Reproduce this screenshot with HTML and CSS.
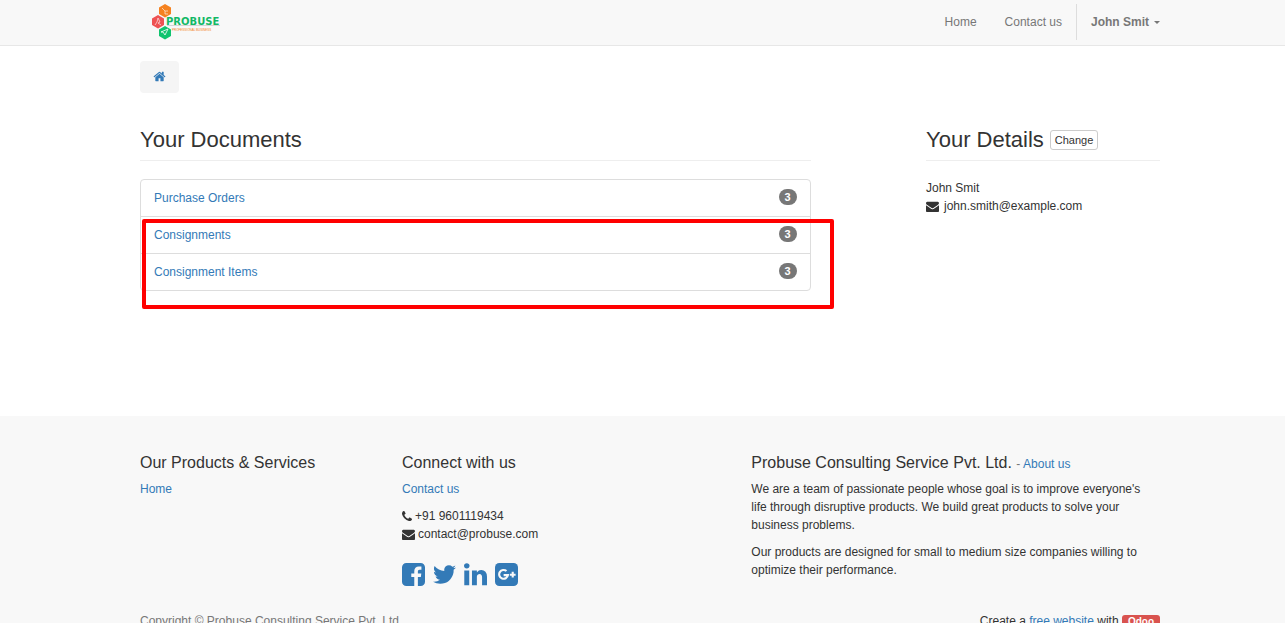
FILE: index.html
```html
<!DOCTYPE html>
<html lang="en">
<head>
<meta charset="utf-8">
<title>Your Documents</title>
<link rel="stylesheet" href="styles.css">
</head>
<body>
<svg class="sprite" aria-hidden="true">
  <symbol id="envelope" viewBox="0 0 1792 1792"><path d="M1792 710v794q0 66-47 113t-113 47h-1472q-66 0-113-47t-47-113v-794q44 49 101 87 362 246 497 345 57 42 92.500 65.500t94.500 48 110 24.500h2q51 0 110-24.500t94.500-48 92.500-65.500q170-123 498-345 57-39 100-87zm0-294q0 79-49 151t-122 123q-376 261-468 325-10 7-42.500 31t-54 38.500-52 32.500-57.500 27-50 9h-2q-23 0-50-9t-57.500-27-52-32.500-54-38.500-42.500-31q-91-64-262-182.500t-205-142.500q-62-42-117-115.500t-55-136.500q0-78 41.500-130t118.500-52h1472q65 0 112.500 47t47.500 113z"/></symbol>
</svg>
<header class="topbar">
  <div class="container topbar-row">
    <a class="brand" href="#" aria-label="Probuse">
      <svg width="72" height="40" viewBox="0 0 72 40">
        <path fill="#f58220" d="M15 4l6 3.500v6.500l-6 3.500-6-3.500V7.500z"/>
        <path fill="#ee5253" d="M8 15l6 3.500v6.500l-6 3.500-6-3.500v-6.500z"/>
        <path fill="#10c46f" d="M15 26l6 3.500v6.500l-6 3.500-6-3.500v-6.500z"/>
        <g fill="none" stroke="#fff" stroke-opacity=".6">
          <path d="M12 8l3 3m0 0h3m-3 0v3h3"/>
          <path d="M5 25l2-3m0 0l1-4 2 4-2 1m0 0l3 2"/>
          <path d="M11 32l7-3-3 6-2-3z" stroke-opacity=".8"/>
        </g>
        <path stroke="#d5d5d5" d="M17 25.500h53"/>
        <text class="brand-name" x="16" y="25">PROBUSE</text>
        <text class="brand-tag" x="22" y="31">PROFESSIONAL BUSINESS</text>
      </svg>
    </a>
    <nav class="nav">
      <a href="#">Home</a>
      <a href="#">Contact us</a>
      <button class="user" type="button">John Smit <span class="caret"></span></button>
    </nav>
  </div>
</header>
<main class="main">
  <div class="container">
    <nav class="crumb" aria-label="Breadcrumb">
      <a href="#" aria-label="Home"><svg class="icon" viewBox="0 0 1792 1792"><path d="M1472 992v480q0 26-19 45t-45 19h-384v-384h-256v384h-384q-26 0-45-19t-19-45v-480q0-1 .5-3t.5-3l575-474 575 474q1 2 1 6zm223-69l-62 74q-8 9-21 11h-3q-13 0-21-7l-692-577-692 577q-12 8-24 7-13-2-21-11l-62-74q-8-10-7-23.500t11-21.500l719-599q32-26 76-26t76 26l244 204v-195q0-14 9-23t23-9h192q14 0 23 9t9 23v408l219 182q10 8 11 21.500t-7 23.500z"/></svg></a>
    </nav>
    <div class="grid">
      <section class="documents">
        <h1 class="title">Your Documents</h1>
        <div class="list-wrap">
          <ul class="list">
            <li><a href="#">Purchase Orders</a><span class="badge">3</span></li>
            <li><a href="#">Consignments</a><span class="badge">3</span></li>
            <li><a href="#">Consignment Items</a><span class="badge">3</span></li>
          </ul>
          <div class="highlight"></div>
        </div>
      </section>
      <section class="details">
        <h2 class="title">Your Details <button class="change" type="button">Change</button></h2>
        <div>John Smit</div>
        <div class="line wide"><svg class="icon"><use href="#envelope"/></svg>john.smith@example.com</div>
      </section>
    </div>
  </div>
</main>
<footer class="footer">
  <div class="container">
    <div class="grid">
      <section class="products">
        <h3 class="subtitle">Our Products &amp; Services</h3>
        <a href="#">Home</a>
      </section>
      <section class="connect">
        <h3 class="subtitle">Connect with us</h3>
        <p><a href="#">Contact us</a></p>
        <div class="line"><svg class="icon phone" viewBox="192 0 1408 1792"><path d="M1600 1240q0 27-10 70.500t-21 68.500q-21 50-122 106-94 51-186 51-27 0-53-3.500t-57.500-12.500-47-14.500-55.500-20.500-49-18q-98-35-175-83-127-79-264-216t-216-264q-48-77-83-175-3-9-18-49t-20.500-55.500-14.500-47-12.500-57.500-3.500-53q0-92 51-186 56-101 106-122 25-11 68.500-21t70.500-10q14 0 21 3 18 6 53 76 11 19 30 54t35 63.500 31 53.500q3 4 17.500 25t21.500 35.500 7 28.500q0 20-28.500 50t-62 55-62 53-28.500 46q0 9 5 22.500t8.500 20.500 14 24 11.500 19q76 137 174 235t235 174q2 1 19 11.500t24 14 20.500 8.500 22.500 5q18 0 46-28.500t53-62 55-62 50-28.500q14 0 28.500 7t35.500 21.500 25 17.500q25 15 53.500 31t63.500 35 54 30q70 35 76 53 3 7 3 21z"/></svg>+91 9601119434</div>
        <div class="line"><svg class="icon"><use href="#envelope"/></svg>contact@probuse.com</div>
        <div class="social">
          <a href="#" aria-label="Facebook"><svg viewBox="128 128 1536 1536"><path d="M1376 128q119 0 203.500 84.500t84.500 203.500v960q0 119-84.500 203.500t-203.500 84.500h-188v-595h199l30-232h-229v-148q0-56 23.500-84t91.500-28l122-1v-207q-63-9-178-9-136 0-217.500 80t-81.500 226v171h-200v232h200v595h-532q-119 0-203.500-84.500t-84.500-203.500v-960q0-119 84.500-203.500t203.500-84.500h960z"/></svg></a>
          <a href="#" aria-label="Twitter"><svg viewBox="108 128 1576 1536"><path d="M1684 408q-67 98-162 167 1 14 1 42 0 130-38 259.500t-115.500 248.500-184.500 210.500-258 146-323 54.500q-271 0-496-145 35 4 78 4 225 0 401-138-105-2-188-64.500t-114-159.500q33 5 61 5 43 0 85-11-112-23-185.500-111.500t-73.500-205.500v-4q68 38 146 41-66-44-105-115t-39-154q0-88 44-163 121 149 294.500 238.500t371.500 99.500q-8-38-8-74 0-134 94.500-228.500t228.500-94.500q140 0 236 102 109-21 205-78-37 115-142 178 93-10 186-50z"/></svg></a>
          <a href="#" aria-label="LinkedIn"><svg viewBox="128 128 1536 1536"><path d="M477 625v991h-330v-991h330zm21-306q1 73-50.500 122t-135.500 49h-2q-82 0-132-49t-50-122q0-74 51.500-122.500t134.500-48.500 133 48.500 51 122.500zm1166 729v568h-329v-530q0-105-40.500-164.500t-126.500-59.500q-63 0-105.500 34.500t-63.500 85.500q-11 30-11 81v553h-329q2-399 2-647t-1-296l-1-48h329v144h-2q20-32 41-56t56.500-52 87-43.500 114.500-15.500q171 0 275 113.500t104 332.500z"/></svg></a>
          <a href="#" aria-label="Google Plus"><svg viewBox="0 0 24 24"><rect width="24" height="24" rx="4.500"/><path fill="none" stroke="#f8f8f8" stroke-width="2.200" d="M12 8.400a4.600 4.600 0 1 0 1.500 4.300H9M18.500 9.200v6M15.500 12.200h6"/></svg></a>
        </div>
      </section>
      <section class="about">
        <h3 class="subtitle">Probuse Consulting Service Pvt. Ltd. <small>- <a href="#">About us</a></small></h3>
        <p>We are a team of passionate people whose goal is to improve everyone's<br>life through disruptive products. We build great products to solve your<br>business problems.</p>
        <p>Our products are designed for small to medium size companies willing to<br>optimize their performance.</p>
      </section>
    </div>
    <div class="bottom">
      <span class="copyright">Copyright © Probuse Consulting Service Pvt. Ltd.</span>
      <span>Create a <a href="#">free website</a> with <a class="odoo" href="#">Odoo</a></span>
    </div>
  </div>
</footer>
</body>
</html>
```
FILE: styles.css
```css
* { box-sizing: border-box; }
html { scrollbar-width: none; }
body {
  margin: 0;
  background: #fff;
  color: #333;
  font: 12px/18px "Liberation Sans", Arial, sans-serif;
}
a { color: #337ab7; text-decoration: none; }
button { font-family: inherit; cursor: pointer; }
p { margin: 0 0 9px; }
.sprite { display: none; }

.topbar, .main, .footer { padding-left: 15px; }
.container { max-width: 1048px; margin: 0 auto; padding: 0 14px; }

.topbar { background: #f8f8f8; border-bottom: 1px solid #e7e7e7; }
.topbar-row { display: flex; justify-content: space-between; height: 45px; }
.brand { padding-left: 10px; }
.brand svg { display: block; }
.brand-name { font: bold 10px "DejaVu Sans", sans-serif; fill: #12b866; }
.brand-tag { font: 3px "Liberation Sans", sans-serif; fill: #f58220; }
.nav { display: flex; align-items: flex-start; padding-top: 4px; }
.nav a { padding: 9px 14px; color: #777; }
.user {
  display: flex;
  align-items: center;
  gap: 5px;
  height: 36px;
  padding: 0 0 0 14px;
  border: 0;
  border-left: 1px solid #ddd;
  background: none;
  color: #777;
  font-size: 12px;
  font-weight: bold;
}
.caret { border: 3px solid transparent; border-top-color: #777; border-bottom: 0; }

.main { min-height: 370px; padding-top: 15px; }
.crumb {
  display: inline-flex;
  padding: 7px 13px;
  border-radius: 4px;
  background: #f5f5f5;
}
.icon { width: 13px; height: 13px; fill: currentColor; }
.crumb a { display: flex; height: 18px; padding-top: 2px; }
.grid {
  display: grid;
  grid-template-columns: repeat(12, minmax(0, 1fr));
  margin: 0 -14px;
}
.grid > section { padding: 0 14px; }
.documents { grid-column: 1 / span 8; }
.details { grid-column: 10 / span 3; }
.title {
  display: flex;
  align-items: center;
  gap: 6px;
  height: 43px;
  margin: 25px 0 18px;
  padding-top: 2px;
  border-bottom: 1px solid #eee;
  font-size: 22px;
  font-weight: normal;
  line-height: 26px;
}
.change {
  height: 20px;
  padding: 0 4px;
  border: 1px solid #ccc;
  border-radius: 3px;
  background: #fff;
  color: #333;
  font-size: 11px;
}
.list-wrap { position: relative; }
.list {
  margin: 0;
  padding: 0;
  list-style: none;
  border: 1px solid #ddd;
  border-radius: 4px;
}
.list li {
  display: flex;
  align-items: flex-start;
  justify-content: space-between;
  height: 36px;
  padding: 9px 13px;
}
.list li + li { height: 37px; border-top: 1px solid #ddd; }
.badge {
  padding: 2px 6px;
  border-radius: 9px;
  background: #777;
  color: #fff;
  font-size: 11px;
  font-weight: bold;
  line-height: 12px;
}
.highlight {
  position: absolute;
  top: 40px;
  right: -23px;
  bottom: -18px;
  left: 2px;
  border: 4px solid #f00;
  border-radius: 2px;
  pointer-events: none;
}
.line { display: flex; align-items: center; gap: 3px; }
.line.wide { gap: 5px; }
.phone { width: 10px; }

.footer { background: #f8f8f8; }
.footer .container { padding-top: 38px; }
.products { grid-column: span 3; }
.connect { grid-column: span 4; }
.about { grid-column: span 5; white-space: nowrap; }
.subtitle {
  margin: 0 0 8px;
  font-size: 16px;
  font-weight: normal;
  line-height: 18px;
}
.subtitle small { color: #777; font-size: 12px; line-height: 12px; }
.social { display: flex; gap: 8px; padding-top: 20px; }
.social a { display: flex; }
.social svg { width: 23px; height: 23px; fill: currentColor; }
.bottom { display: flex; justify-content: space-between; padding: 24px 0 20px; }
.copyright { color: #777; }
.odoo {
  display: inline-block;
  padding: 0 6px;
  border-radius: 3px;
  background: #d9534f;
  color: #fff;
  font-size: 10px;
  font-weight: bold;
  line-height: 14px;
}
```
